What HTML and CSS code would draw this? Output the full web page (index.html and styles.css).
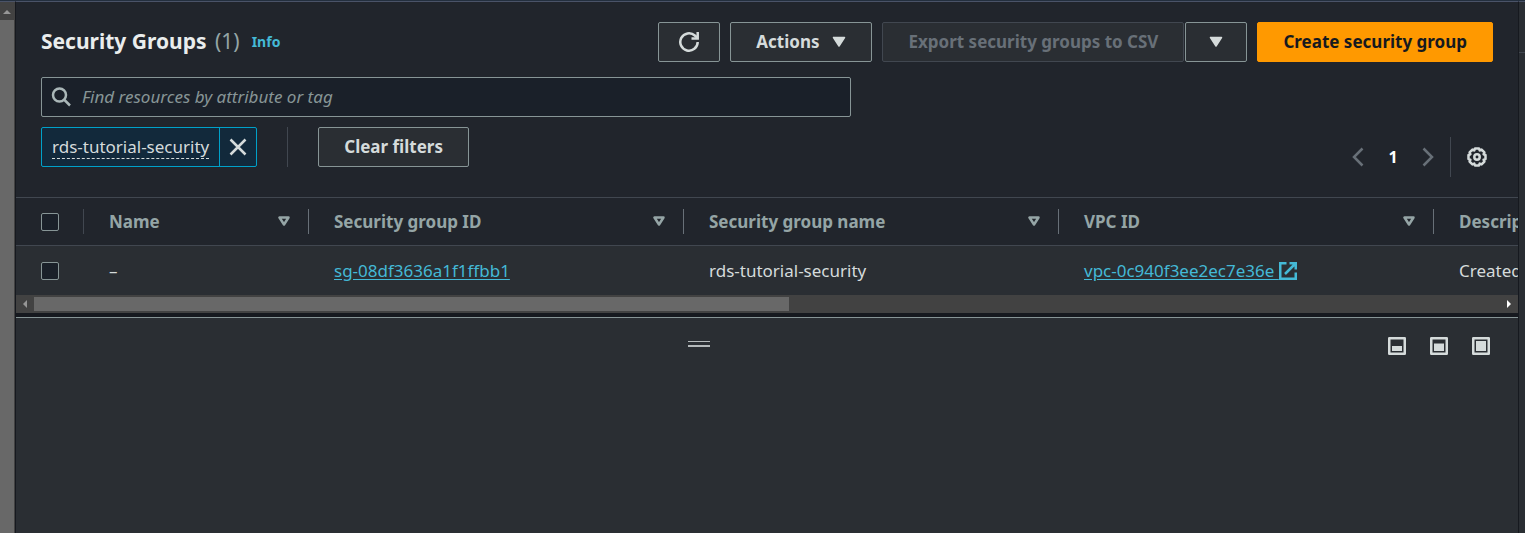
FILE: index.html
```html
<!DOCTYPE html>
<html lang="en">
<head>
<meta charset="utf-8">
<title>Security Groups</title>
<link rel="stylesheet" href="styles.css">
</head>
<body>
<div class="app">
  <div class="page-scroll" aria-hidden="true">
    <div class="page-scroll-arrow"><svg width="8" height="4" viewBox="0 0 8 4"><path d="M4 0l4 4H0z" fill="#969696"/></svg></div>
    <div class="page-scroll-thumb"></div>
  </div>
  <main class="main">
    <section class="groups">
      <header class="header">
        <h1 class="title">Security Groups <span class="count">(1)</span></h1>
        <a class="info" href="#">Info</a>
        <div class="actions">
          <button class="btn btn-icon" type="button" aria-label="Refresh">
            <svg width="20" height="20" viewBox="0 0 20 20" fill="none" stroke="currentColor" stroke-width="2.5"><path d="M18.700 10A8.700 8.700 0 1 1 15.800 3.500L18.500 6"/><path d="M18.700 0v6.500H12.500"/></svg>
          </button>
          <button class="btn" type="button">Actions
            <svg width="14" height="12" viewBox="0 0 14 12"><path d="M1.500 1.500h11L7 10z" fill="currentColor" stroke="currentColor" stroke-width="1.500" stroke-linejoin="round"/></svg>
          </button>
          <div class="split">
            <button class="btn" type="button" disabled>Export security groups to CSV</button>
            <button class="btn btn-icon" type="button" aria-label="More export options">
              <svg width="14" height="12" viewBox="0 0 14 12"><path d="M1.500 1.500h11L7 10z" fill="currentColor" stroke="currentColor" stroke-width="1.500" stroke-linejoin="round"/></svg>
            </button>
          </div>
          <button class="btn btn-primary" type="button">Create security group</button>
        </div>
      </header>
      <div class="toolbar">
        <div class="filters">
          <label class="search">
            <svg width="20" height="20" viewBox="0 0 20 20" fill="none" stroke="currentColor" stroke-width="2.500"><circle cx="8.500" cy="8" r="6.500"/><path d="M13 12.500l6 6"/></svg>
            <input class="search-input" type="text" aria-label="Find resources" placeholder="Find resources by attribute or tag">
          </label>
          <div class="tokens">
            <div class="token">
              <button class="token-label" type="button"><span class="token-text">rds-tutorial-security</span></button>
              <button class="token-remove" type="button" aria-label="Remove filter">
                <svg width="18" height="18" viewBox="0 0 18 18" stroke="currentColor" stroke-width="2.500"><path d="M1.500 1.500l15 15M16.500 1.500l-15 15"/></svg>
              </button>
            </div>
            <button class="btn clear" type="button">Clear filters</button>
          </div>
        </div>
        <nav class="pager" aria-label="Pages">
          <button class="pager-arrow" type="button" aria-label="Previous page" disabled><svg width="12" height="20" viewBox="0 0 12 20" fill="none" stroke="currentColor" stroke-width="2.500"><path d="M10.500 1.500L2 10l8.500 8.500"/></svg></button>
          <button class="pager-page" type="button" aria-current="page">1</button>
          <button class="pager-arrow" type="button" aria-label="Next page" disabled><svg width="12" height="20" viewBox="0 0 12 20" fill="none" stroke="currentColor" stroke-width="2.500"><path d="M1.500 1.500L10 10l-8.500 8.500"/></svg></button>
          <button class="settings" type="button" aria-label="Preferences">
            <svg width="20" height="20" viewBox="0 0 20 20" fill="none" stroke="currentColor" stroke-width="2.500" stroke-linejoin="round"><path d="M8 1.500h4l.7 1.900 1.900-.8 2.800 2.800-.8 1.900 1.900.7v4l-1.900.7.8 1.900-2.800 2.800-1.900-.8-.7 1.900H8l-.7-1.900-1.900.8-2.800-2.800.8-1.900-1.900-.7V8l1.900-.7-.8-1.900 2.800-2.800 1.900.8z"/><circle cx="10" cy="10" r="2.700"/></svg>
          </button>
        </nav>
      </div>
      <div class="table-wrap">
        <table class="table">
          <colgroup><col class="col-check"><col class="col-name"><col class="col-wide"><col class="col-wide"><col class="col-wide"><col class="col-wide"></colgroup>
          <thead>
            <tr>
              <th scope="col"><div class="head head-check"><input class="check" type="checkbox" aria-label="Select all"></div></th>
              <th scope="col"><div class="head">Name<svg class="sort" width="12" height="11" viewBox="0 0 12 11"><path d="M1.500 1.500h9L6 8.500z"/></svg></div></th>
              <th scope="col"><div class="head">Security group ID<svg class="sort" width="12" height="11" viewBox="0 0 12 11"><path d="M1.500 1.500h9L6 8.500z"/></svg></div></th>
              <th scope="col"><div class="head">Security group name<svg class="sort" width="12" height="11" viewBox="0 0 12 11"><path d="M1.500 1.500h9L6 8.500z"/></svg></div></th>
              <th scope="col"><div class="head">VPC ID<svg class="sort" width="12" height="11" viewBox="0 0 12 11"><path d="M1.500 1.500h9L6 8.500z"/></svg></div></th>
              <th scope="col"><div class="head">Description</div></th>
            </tr>
          </thead>
          <tbody>
            <tr>
              <td><input class="check" type="checkbox" aria-label="Select rds-tutorial-security"></td>
              <td>–</td>
              <td><a class="link" href="#">sg-08df3636a1f1ffbb1</a></td>
              <td>rds-tutorial-security</td>
              <td><a class="link" href="#">vpc-0c940f3ee2ec7e36e <svg class="external" width="18" height="18" viewBox="0 0 18 18" fill="none" stroke="currentColor" stroke-width="2.500"><path d="M7.500 1.250H1.250v15.500h15.500V10.500M10.500 1.250h6.250V7.500M16.500 1.500L6 12"/></svg></a></td>
              <td>Created</td>
            </tr>
          </tbody>
        </table>
      </div>
      <div class="table-scroll" aria-hidden="true">
        <svg width="4" height="8" viewBox="0 0 4 8"><path d="M4 0v8L0 4z" fill="#969696"/></svg>
        <div class="table-scroll-track"><div class="table-scroll-thumb"></div></div>
        <svg width="4" height="8" viewBox="0 0 4 8"><path d="M0 0v8l4-4z" fill="#fff"/></svg>
      </div>
    </section>
    <section class="panel">
      <div class="grip" role="separator" aria-label="Resize panel"></div>
      <div class="sizes">
        <button class="size" type="button" aria-label="Small panel"><svg width="18" height="18" viewBox="0 0 18 18"><path d="M1.250 1.250h15.500v15.500H1.250z" fill="none" stroke="currentColor" stroke-width="2.500" stroke-linejoin="round"/><path d="M4 9h10v5H4z" fill="currentColor"/></svg></button>
        <button class="size" type="button" aria-label="Medium panel"><svg width="18" height="18" viewBox="0 0 18 18"><path d="M1.250 1.250h15.500v15.500H1.250z" fill="none" stroke="currentColor" stroke-width="2.500" stroke-linejoin="round"/><path d="M4 6.500h10V14H4z" fill="currentColor"/></svg></button>
        <button class="size" type="button" aria-label="Large panel"><svg width="18" height="18" viewBox="0 0 18 18"><path d="M1.250 1.250h15.500v15.500H1.250z" fill="none" stroke="currentColor" stroke-width="2.500" stroke-linejoin="round"/><path d="M4 4h10v10H4z" fill="currentColor"/></svg></button>
      </div>
    </section>
  </main>
  <aside class="side"></aside>
</div>
</body>
</html>
```
FILE: styles.css
```css
* { box-sizing: border-box; }

body {
  margin: 0;
  background: #2a2e33;
  color: #d5dbdb;
  font: 17px/24px "Noto Sans", "Open Sans", sans-serif;
}

button, input { font: inherit; color: inherit; margin: 0; }
button { background: none; border: 0; padding: 0; }
svg { display: block; flex: none; }

.app {
  display: flex;
  min-height: 100vh;
  border-top: 1px solid #232f3e;
}

.page-scroll {
  display: flex;
  flex-direction: column;
  flex: none;
  width: 16px;
  background: #424242;
  border-top: 1px solid #4a5368;
  border-right: 1px solid #16191f;
}
.page-scroll-arrow { padding: 8px 3px 6px; }
.page-scroll-thumb { flex: 1; width: 14px; background: #686868; }

.main {
  display: flex;
  flex-direction: column;
  flex: 1;
  min-width: 0;
  border-top: 1px solid #4a5368;
}
.groups { background: #21252c; border-bottom: 4px solid #16191f; }

.header {
  display: flex;
  align-items: center;
  padding: 20px 25px 15px;
}
.title { margin: 0; padding-bottom: 2px; font-size: 21px; line-height: 28px; font-weight: 700; color: #eaeded; }
.count { margin-left: 3px; font-weight: 400; color: #95a5a6; }
.info { margin-left: 12px; font-size: 14px; font-weight: 700; color: #44b9d6; text-decoration: none; }
.actions { display: flex; gap: 10px; margin-left: auto; }

.btn {
  display: flex;
  align-items: center;
  justify-content: center;
  gap: 13px;
  height: 40px;
  padding: 0 25px;
  border: 1px solid #879596;
  border-radius: 2px;
  background: #2a2e33;
  color: #d5dbdb;
  font-weight: 700;
  white-space: nowrap;
}
.btn:disabled { border-color: #414750; color: #687078; }
.btn-icon { width: 62px; padding: 0; }
.btn-primary { border-color: #ff9900; background: #ff9900; color: #16191f; }
.split { display: flex; gap: 1px; }

.toolbar {
  display: flex;
  align-items: flex-end;
  justify-content: space-between;
  gap: 25px;
  padding: 0 25px 20px;
}
.filters { flex: 0 1 810px; padding-bottom: 10px; }
.search {
  display: flex;
  align-items: center;
  gap: 11px;
  height: 40px;
  padding: 0 9px;
  border: 1px solid #879596;
  border-radius: 2px;
  background: #1a2029;
  color: #aab7b8;
}
.search-input { flex: 1; min-width: 0; border: 0; padding: 0; background: none; outline: 0; }
.search-input::placeholder { color: #879596; font-style: italic; opacity: 1; }

.tokens { display: flex; margin-top: 10px; }
.token {
  display: flex;
  border: 1px solid #00a1c9;
  border-radius: 2px;
  background: #12293b;
}
.token-label { padding: 0 10px; }
.token-text { display: block; line-height: 22px; border-bottom: 1px dashed #d5dbdb; }
.token-remove {
  display: flex;
  align-items: center;
  justify-content: center;
  width: 37px;
  border-left: 1px solid #00a1c9;
}
.tokens::after { content: ""; order: 1; width: 1px; margin: 0 30px; background: #414750; }
.clear { order: 2; }

.pager { display: flex; align-items: center; height: 40px; }
.pager-arrow { color: #687078; }
.pager-page { width: 58px; color: #fff; font-size: 16px; font-weight: 700; }
.settings {
  display: flex;
  align-items: center;
  height: 40px;
  margin-left: 16px;
  padding: 0 6px 0 16px;
  border-left: 1px solid #414750;
}

.table-wrap { overflow: hidden; border-top: 1px solid #414750; }
.table { width: 1793px; table-layout: fixed; border-collapse: separate; border-spacing: 0; }
.col-check { width: 68px; }
.col-name { width: 225px; }
.col-wide { width: 375px; }
.table th { height: 48px; padding: 0; border-bottom: 1px solid #414750; text-align: left; color: #95a5a6; }
.head {
  display: flex;
  align-items: center;
  justify-content: space-between;
  height: 25px;
  padding: 0 18px 0 25px;
  border-right: 1px solid #687078;
}
.head-check { border-color: #414750; }
.sort { fill: none; stroke: currentColor; stroke-width: 2.5; stroke-linejoin: round; }
.table td { height: 49px; padding: 0 25px; background: #2a2e33; }
.check {
  appearance: none;
  display: block;
  width: 18px;
  height: 18px;
  border: 1px solid #879596;
  border-radius: 2px;
  background: #1a2029;
}
.link { color: #44b9d6; text-underline-offset: 2px; }
.external { display: inline-block; vertical-align: -3px; }

.table-scroll {
  display: flex;
  align-items: center;
  gap: 7px;
  height: 18px;
  padding: 0 7px;
  background: #424242;
}
.table-scroll-track { flex: 1; }
.table-scroll-thumb { width: 51.5%; height: 14px; background: #686868; }

.panel {
  position: relative;
  flex: 1;
  border-top: 1px solid #879596;
  padding: 19px 28px;
}
.grip {
  position: absolute;
  top: 23px;
  left: 672px;
  width: 22px;
  height: 6px;
  border: solid #b4b9bb;
  border-width: 1px 0 2px;
}
.sizes { display: flex; justify-content: flex-end; gap: 24px; }
.size { color: #d5dbdb; }

.side {
  flex: none;
  width: 7px;
  border-top: 1px solid #4a5368;
  border-left: 1px solid #16191f;
  background: linear-gradient(#414750, #414750) 0 50px / 100% 1px no-repeat #2a2e33;
}
```
